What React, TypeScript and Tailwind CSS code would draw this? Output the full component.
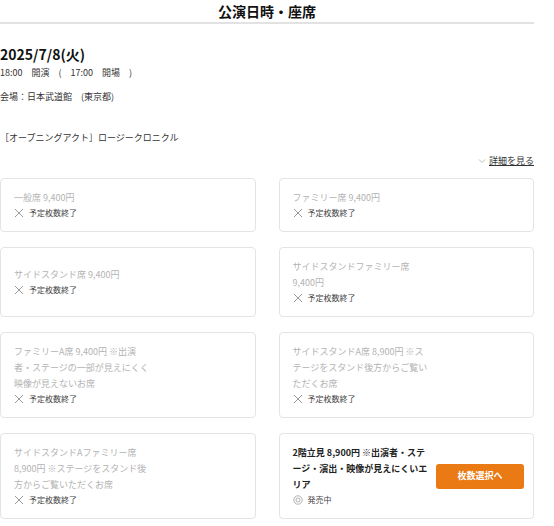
import React from 'react';

type Seat = {
  name: string;
  onSale?: boolean;
};

const seats: Seat[] = [
  { name: '一般席 9,400円' },
  { name: 'ファミリー席 9,400円' },
  { name: 'サイドスタンド席 9,400円' },
  { name: 'サイドスタンドファミリー席 9,400円' },
  { name: 'ファミリーA席 9,400円 ※出演者・ステージの一部が見えにくく映像が見えないお席' },
  { name: 'サイドスタンドA席 8,900円 ※ステージをスタンド後方からご覧いただくお席' },
  { name: 'サイドスタンドAファミリー席 8,900円 ※ステージをスタンド後方からご覧いただくお席' },
  { name: '2階立見 8,900円 ※出演者・ステージ・演出・映像が見えにくいエリア', onSale: true },
];

function CrossIcon() {
  return (
    <svg width="10" height="10" viewBox="0 0 10 10" className="shrink-0">
      <path d="M1 1 L9 9 M9 1 L1 9" stroke="#9a9a9a" strokeWidth="1" fill="none" />
    </svg>
  );
}

function CircleIcon() {
  return (
    <svg width="10" height="10" viewBox="0 0 10 10" className="shrink-0">
      <circle cx="5" cy="5" r="4.2" stroke="#a8a8a8" strokeWidth="0.9" fill="none" />
      <circle cx="5" cy="5" r="2" stroke="#a8a8a8" strokeWidth="0.9" fill="none" />
    </svg>
  );
}

function SeatCard({ seat }: { seat: Seat }) {
  return (
    <div className="flex items-center rounded-[4px] border border-[#e4e4e4] bg-white py-[11px] pl-[13px] pr-[9px]">
      <div className="w-[136px] shrink-0">
        <p
          className={
            seat.onSale
              ? 'text-[9px] font-bold leading-[16px] text-[#222]'
              : 'text-[9px] leading-[16px] text-[#b3b3b3]'
          }
        >
          {seat.name}
        </p>
        <div className="flex h-[14px] items-center gap-[5px]">
          {seat.onSale ? <CircleIcon /> : <CrossIcon />}
          <span className="text-[8px] leading-none text-[#444]">
            {seat.onSale ? '発売中' : '予定枚数終了'}
          </span>
        </div>
      </div>
      <div className="ml-auto w-[88px] shrink-0">
        {seat.onSale && (
          <button className="flex h-[25px] w-[88px] items-center justify-center rounded-[3px] bg-[#e97a14] text-[9px] font-bold text-white">
            枚数選択へ
          </button>
        )}
      </div>
    </div>
  );
}

export default function App() {
  return (
    <div
      className="min-h-[526px] w-[554px] bg-white text-[#333]"
      style={{ fontFamily: '"Noto Sans CJK JP", "Noto Sans", sans-serif' }}
    >
      <div className="w-[534px]">
        <div className="box-content flex h-[22px] items-center justify-center border-b-2 border-[#e2e2e2]">
          <h1 className="text-[14px] font-bold leading-none text-[#111]">公演日時・座席</h1>
        </div>

        <p className="mt-[20px] text-[14px] font-bold leading-[20px] text-[#111]">2025/7/8(火)</p>
        <p className="mt-[2px] text-[9px] leading-[14px]">18:00　開演　(　17:00　開場　)</p>
        <p className="mt-[10px] text-[9px] leading-[14px]">会場：日本武道館　(東京都)</p>
        <p className="mt-[27px] text-[9px] leading-[14px]">［オープニングアクト］ロージークロニクル</p>

        <div className="mt-[9px] flex items-center justify-end gap-[3px]">
          <svg width="8" height="6" viewBox="0 0 8 6">
            <path d="M1 1.5 L4 4.5 L7 1.5" stroke="#aaa" strokeWidth="0.8" fill="none" />
          </svg>
          <a className="text-[9px] leading-[14px] text-[#333] underline">詳細を見る</a>
        </div>

        <div className="mt-[10px] grid grid-cols-2 gap-x-[23px] gap-y-[15px]">
          {seats.map((s) => (
            <SeatCard key={s.name} seat={s} />
          ))}
        </div>
      </div>
    </div>
  );
}
